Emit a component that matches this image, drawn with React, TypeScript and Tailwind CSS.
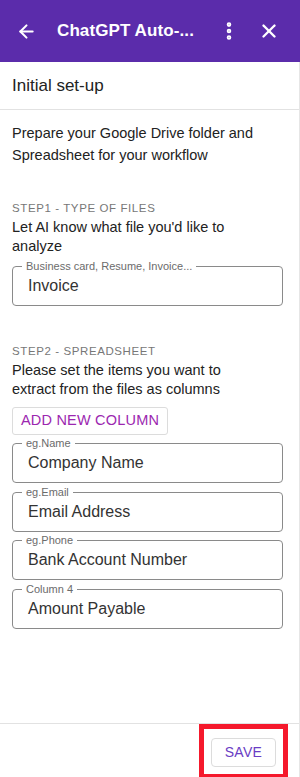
import { ArrowLeft, EllipsisVertical, X } from "lucide-react";

const columns = [
  { label: "eg.Name", value: "Company Name" },
  { label: "eg.Email", value: "Email Address" },
  { label: "eg.Phone", value: "Bank Account Number" },
  { label: "Column 4", value: "Amount Payable" },
];

const OutlinedField = ({ label, value }: { label: string; value: string }) => (
  <div className="relative flex h-[40px] items-center rounded-[4px] border border-[#8a8a8a] pl-[15px]">
    {/* Floating label over the border */}
    <span className="absolute -top-[8px] left-[9px] bg-white px-[4px] text-[11px] leading-[14px] text-[#6b6b6b]">
      {label}
    </span>
    <span className="text-[16px] leading-[20px] text-[#333]">{value}</span>
  </div>
);

const App = () => {
  return (
    <div className="flex h-[777px] w-[300px] flex-col bg-white font-['Liberation_Sans',Arial,sans-serif]">
      {/* Header */}
      <div className="flex h-[62px] shrink-0 items-center bg-[#5b2cab] text-white">
        <ArrowLeft className="ml-[16px] h-[21px] w-[21px]" strokeWidth={2.4} />
        <div className="ml-[20px] flex-1 text-[17px] font-bold tracking-[0.1px]">ChatGPT Auto-...</div>
        <EllipsisVertical className="mr-[18px] h-[22px] w-[22px]" strokeWidth={3} />
        <X className="mr-[20px] h-[22px] w-[22px]" strokeWidth={2.6} />
      </div>

      <div className="flex flex-1 flex-col border-r border-[#e6e6e6]">
        {/* Title */}
        <div className="flex h-[48px] items-center border-b border-[#e2e2e2] px-[12px] text-[17px] text-[#222]">
          Initial set-up
        </div>

        {/* Body */}
        <div className="flex-1 px-[12px] pt-[12px] text-[#222]">
          <p className="w-[250px] text-[14.5px] leading-[22px]">
            Prepare your Google Drive folder and Spreadsheet for your workflow
          </p>

          <div className="mt-[35px] text-[11.5px] uppercase leading-[14px] tracking-[0.6px] text-[#777]">
            Step1 - Type of files
          </div>
          <p className="mt-[3px] w-[250px] text-[14.5px] leading-[19px]">
            Let AI know what file you'd like to analyze
          </p>
          <div className="mt-[10px] w-[271px]">
            <OutlinedField label="Business card, Resume, Invoice..." value="Invoice" />
          </div>

          <div className="mt-[38px] text-[11.5px] uppercase leading-[14px] tracking-[0.6px] text-[#777]">
            Step2 - Spreadsheet
          </div>
          <p className="mt-[3px] w-[250px] text-[14.5px] leading-[19px]">
            Please set the items you want to extract from the files as columns
          </p>
          <button className="mt-[8px] h-[28px] rounded-[3px] border border-[#dcdcdc] px-[8px] text-[14.5px] tracking-[0.2px] text-[#9c27b0]">
            ADD NEW COLUMN
          </button>
          <div className="mt-[8px] flex w-[271px] flex-col gap-[8.5px]">
            {columns.map((c) => (
              <OutlinedField key={c.label} label={c.label} value={c.value} />
            ))}
          </div>
        </div>

        {/* Footer */}
        <div className="flex h-[54px] shrink-0 items-start justify-end border-t border-[#e2e2e2] pr-[11px]">
          <div className="border-[5px] border-[#f5192c] bg-white px-[7px] pt-[9px] pb-[7px]">
            <button className="h-[29px] w-[65px] rounded-[4px] border border-[#dcdcdc] text-[14px] tracking-[0.3px] text-[#6a3dc4]">
              SAVE
            </button>
          </div>
        </div>
      </div>
    </div>
  );
};

export default App;
